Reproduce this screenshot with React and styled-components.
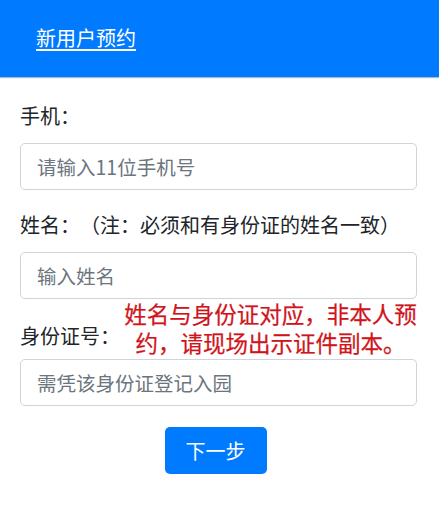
import React from "react";
import styled, { createGlobalStyle } from "styled-components";

const GlobalStyle = createGlobalStyle`
  * {
    box-sizing: border-box;
  }

  body {
    margin: 0;
    background: #fff;
    font-family: "Noto Sans CJK SC", "Noto Sans", sans-serif;
    color: #212529;
    text-spacing-trim: space-all;
  }
`;

const fields = [
  { label: "手机：", placeholder: "请输入11位手机号" },
  { label: "姓名：（注：必须和有身份证的姓名一致）", placeholder: "输入姓名" },
  {
    label: "身份证号：",
    placeholder: "需凭该身份证登记入园",
    note: "姓名与身份证对应，非本人预约，请现场出示证件副本。",
  },
];

const App = () => {
  return (
    <>
      <GlobalStyle />
      <StyledHeader>
        <a href="#new">新用户预约</a>
      </StyledHeader>
      <StyledForm onSubmit={(e) => e.preventDefault()}>
        {fields.map((item, idx) => (
          <Field key={idx}>
            <LabelRow $hasNote={!!item.note}>
              <Label>{item.label}</Label>
              {item.note && <Note>{item.note}</Note>}
            </LabelRow>
            <Input type="text" placeholder={item.placeholder} />
          </Field>
        ))}
        <Actions>
          <NextButton type="submit">下一步</NextButton>
        </Actions>
      </StyledForm>
    </>
  );
};

const StyledHeader = styled.header`
  height: 77px;
  background-color: #007bff;
  display: flex;
  align-items: center;
  padding: 0 36px;
  box-shadow: 0 1px 1px rgba(0, 60, 140, 0.35);

  a {
    color: #fff;
    font-size: 20px;
    line-height: 1;
    text-decoration: underline;
    text-underline-offset: 3px;
    margin-top: -2px;
  }
`;

const StyledForm = styled.form`
  padding: 24px 22px 0 20px;
  display: flex;
  flex-direction: column;
`;

const Field = styled.div`
  display: flex;
  flex-direction: column;
  margin-bottom: 20px;
`;

const LabelRow = styled.div`
  display: flex;
  align-items: flex-end;
  margin-bottom: ${(p) => (p.$hasNote ? "8px" : "12px")};
`;

const Label = styled.label`
  font-size: 20px;
  line-height: 30px;
  white-space: nowrap;
  flex-shrink: 0;
`;

const Note = styled.p`
  margin: -20px -4px -6px 0;
  flex: 1;
  color: #d0141c;
  font-size: 22.5px;
  font-weight: 400;
  -webkit-text-stroke: 0.25px #d0141c;
  line-height: 29px;
  text-align: center;
`;

const Input = styled.input`
  height: 47px;
  width: 100%;
  border: 1px solid #ced4da;
  border-radius: 5px;
  padding: 0 16px;
  font-family: inherit;
  font-size: 19.5px;
  color: #495057;
  outline: none;

  &::placeholder {
    color: #6c757d;
  }
`;

const Actions = styled.div`
  display: flex;
  justify-content: center;
  padding-right: 6px;
  margin-top: 1px;
`;

const NextButton = styled.button`
  width: 102px;
  height: 47px;
  border: none;
  border-radius: 5px;
  background-color: #007bff;
  color: #fff;
  font-family: inherit;
  font-size: 20px;
  cursor: pointer;
`;

export default App;
